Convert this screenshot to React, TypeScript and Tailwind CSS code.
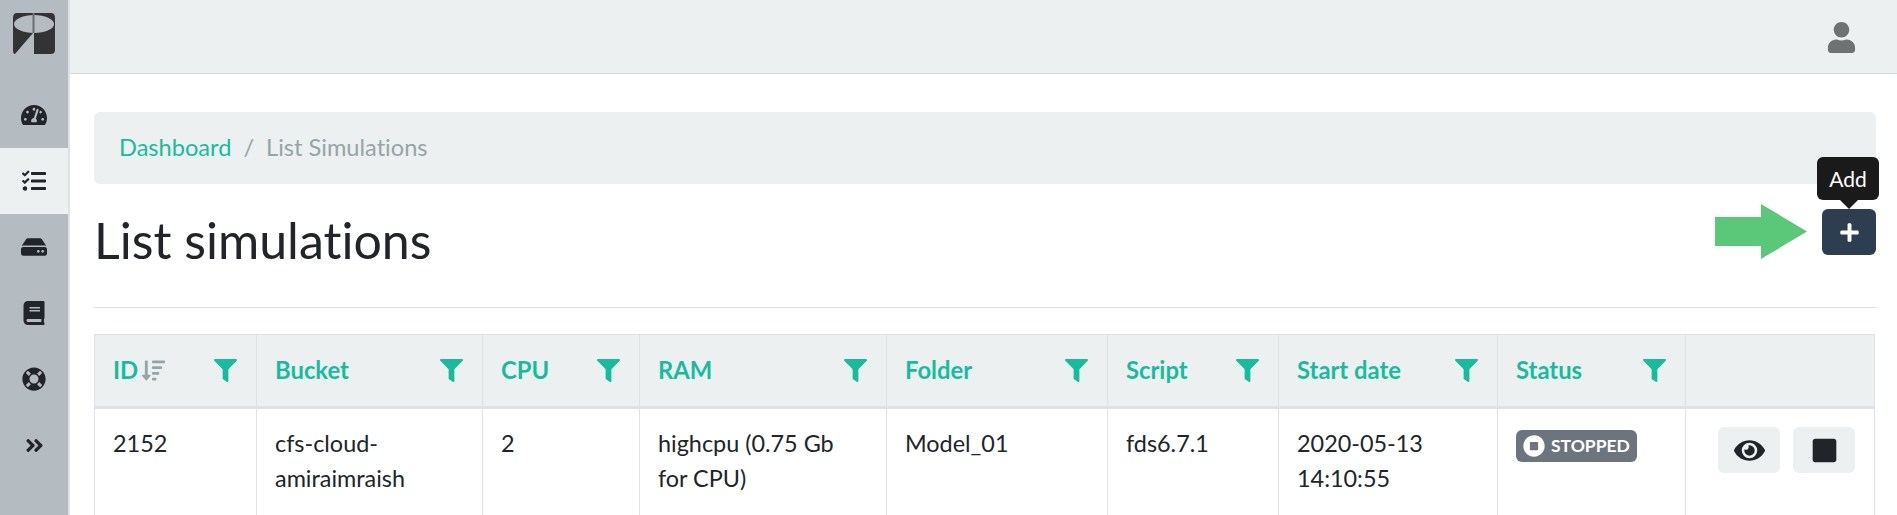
import React from "react";
import {
  FaTachometerAlt,
  FaTasks,
  FaHdd,
  FaBook,
  FaLifeRing,
  FaAngleDoubleRight,
  FaUser,
  FaFilter,
  FaSortAmountDown,
  FaEye,
  FaStop,
  FaPlus,
  FaStopCircle,
} from "react-icons/fa";

const navItems = [
  { icon: FaTachometerAlt, size: 26 },
  { icon: FaTasks, size: 24, active: true },
  { icon: FaHdd, size: 26 },
  { icon: FaBook, size: 24 },
  { icon: FaLifeRing, size: 24 },
  { icon: FaAngleDoubleRight, size: 21 },
];

const columns = [
  { label: "ID", width: "w-[162px]", sort: true },
  { label: "Bucket", width: "w-[226px]" },
  { label: "CPU", width: "w-[157px]" },
  { label: "RAM", width: "w-[247px]" },
  { label: "Folder", width: "w-[221px]" },
  { label: "Script", width: "w-[171px]" },
  { label: "Start date", width: "w-[219px]" },
  { label: "Status", width: "w-[188px]" },
];

const Logo = () => (
  <svg width="44" height="42" viewBox="0 0 44 42">
    <path d="M5 0H39Q43 0 43 5V37Q43 41 39 41H22V20H21L3 41Q1 41 1 37V5Q1 0 5 0Z" fill="#333" />
    <ellipse cx="22" cy="11" rx="20" ry="9" fill="#b4bcc2" />
    <rect x="20.5" y="0" width="2" height="20" fill="#6b6f72" />
  </svg>
);

const Sidebar = () => (
  <aside className="w-[68px] shrink-0 bg-[#b4bcc2] flex flex-col">
    <div className="h-[82px] flex items-start justify-center pt-[13px]">
      <Logo />
    </div>
    {navItems.map((item, index) => {
      const Icon = item.icon;
      return (
        <div
          key={index}
          className={
            item.active
              ? "h-[66px] flex items-center justify-center text-[#212529] bg-[#ecf0f1]"
              : "h-[66px] flex items-center justify-center text-[#212529]"
          }
        >
          <Icon size={item.size} />
        </div>
      );
    })}
  </aside>
);

const App: React.FC = () => {
  return (
    <div className="flex h-[515px] w-[1897px] overflow-hidden bg-white font-['Lato','Open_Sans',sans-serif] text-[#212529] [font-variant-ligatures:none]">
      <Sidebar />
      <div className="flex-1 min-w-0 border-l-2 border-[#dee2e6]">
        <header className="h-[74px] bg-[#ecf0f1] border-b border-[#d5dadc] flex items-center justify-end pr-[40px] pt-[2px]">
          <FaUser size={31} className="text-[#6f7273]" />
        </header>
        <main className="pl-6 pr-[21px] pt-[38px]">
          <nav className="h-[72px] rounded-md bg-[#ecf0f1] pl-[25px] pr-6 flex items-center gap-[12px] text-[23.6px]">
            <span className="text-[#18bc9c]">Dashboard</span>
            <span className="text-[#95a5a6]">/</span>
            <span className="text-[#95a5a6]">List Simulations</span>
          </nav>
          <div className="relative h-[124px] border-b border-[#dee2e6] flex justify-between">
            <h1 className="text-[50.1px] leading-[112px] font-normal">List simulations</h1>
            <div className="relative pt-[25px]">
              <button className="w-[54px] h-[46px] rounded-md bg-[#2c3e50] flex items-center justify-center text-white">
                <FaPlus size={21} />
              </button>
              <div className="absolute right-[-3px] top-[-27px] w-[62px] h-[43px] rounded-md bg-[#1a1a1a] text-white text-[21px] flex items-center justify-center">
                Add
              </div>
              <div className="absolute left-[18px] top-[16px] w-0 h-0 border-x-[9px] border-x-transparent border-t-[9px] border-t-[#1a1a1a]" />
              <svg
                className="absolute left-[-107px] top-[20px]"
                width="92"
                height="55"
                viewBox="0 0 92 55"
              >
                <path d="M0 13H46V0L92 27.5L46 55V42H0Z" fill="#5ac878" />
              </svg>
            </div>
          </div>
          <table className="mt-[26px] w-[1781px] table-fixed border-collapse text-[23.4px]">
            <thead>
              <tr className="bg-[#ecf0f1]">
                {columns.map((col) => (
                  <th
                    key={col.label}
                    className={`${col.width} h-[73px] border border-[#dee2e6] border-b-[3px] pl-[18px] pr-[19px] text-left text-[23.8px] font-bold text-[#18bc9c]`}
                  >
                    <div className="flex items-center justify-between">
                      <span className="flex items-center gap-1">
                        {col.label}
                        {col.sort && <FaSortAmountDown size={23} className="text-[#95a5a6]" />}
                      </span>
                      <FaFilter size={23} />
                    </div>
                  </th>
                ))}
                <th className="border border-[#dee2e6] border-b-[3px]" />
              </tr>
            </thead>
            <tbody>
              <tr className="align-top leading-[35px]">
                <td className="h-[108px] border border-[#dee2e6] px-[18px] pt-[17px]">2152</td>
                <td className="border border-[#dee2e6] px-[18px] pt-[17px]">cfs-cloud-amiraimraish</td>
                <td className="border border-[#dee2e6] px-[18px] pt-[17px]">2</td>
                <td className="border border-[#dee2e6] pl-[18px] pr-[24px] pt-[17px]">highcpu (0.75 Gb for CPU)</td>
                <td className="border border-[#dee2e6] px-[18px] pt-[17px]">Model_01</td>
                <td className="border border-[#dee2e6] px-[18px] pt-[17px]">fds6.7.1</td>
                <td className="border border-[#dee2e6] px-[18px] pt-[17px]">2020-05-13 14:10:55</td>
                <td className="border border-[#dee2e6] px-[18px] pt-[21px]">
                  <span className="inline-flex items-center gap-[6px] h-8 rounded-md bg-[#6c757d] px-[7px] text-white text-[17.5px] font-bold leading-none">
                    <FaStopCircle size={22} />
                    STOPPED
                  </span>
                </td>
                <td className="border border-[#dee2e6] pt-[18px]">
                  <div className="flex justify-end gap-[13px] pr-[19px]">
                    <button className="w-[62px] h-[46px] rounded-md bg-[#ecf0f1] flex items-center justify-center">
                      <FaEye size={31} />
                    </button>
                    <button className="w-[62px] h-[46px] rounded-md bg-[#ecf0f1] flex items-center justify-center">
                      <FaStop size={27} />
                    </button>
                  </div>
                </td>
              </tr>
            </tbody>
          </table>
        </main>
      </div>
    </div>
  );
};

export default App;
